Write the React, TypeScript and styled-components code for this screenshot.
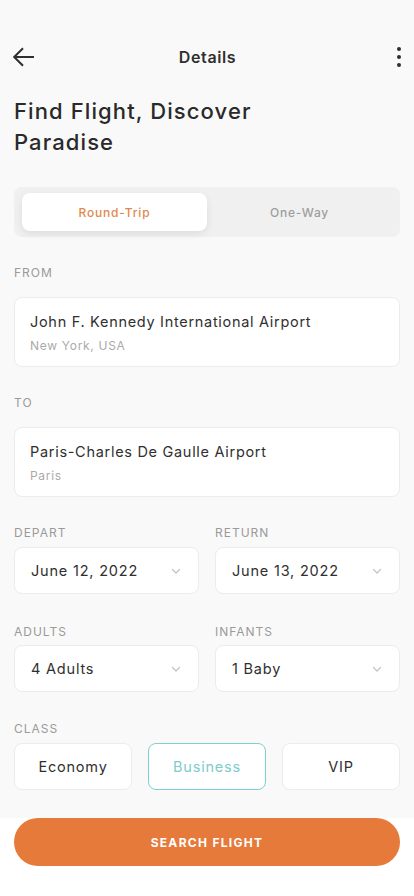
import styled, { createGlobalStyle } from "styled-components";

const GlobalStyle = createGlobalStyle`
  html, body {
    margin: 0;
    padding: 0;
    background: #f9f9f9;
    font-family: Inter, "Noto Sans", sans-serif;
    color: #2f2f2f;
  }
  * { box-sizing: border-box; }
`;

const Screen = styled.div`
  width: 414px;
  height: 896px;
  display: flex;
  flex-direction: column;
  background: #f9f9f9;
  overflow: hidden;
`;

const Content = styled.div`
  flex: 1;
  padding: 0 14px;
  display: flex;
  flex-direction: column;
`;

const Header = styled.header`
  height: 44px;
  margin-top: 35px;
  display: flex;
  align-items: center;
  justify-content: space-between;
`;

const IconButton = styled.button<{ $end?: boolean }>`
  width: 24px;
  height: 24px;
  padding: 0;
  margin: ${(p) => (p.$end ? "0 -2px 0 0" : "0 0 0 -1px")};
  border: none;
  background: none;
  display: flex;
  align-items: center;
  justify-content: ${(p) => (p.$end ? "flex-end" : "flex-start")};
  color: #2f2f2f;
`;

const HeaderTitle = styled.h1`
  margin: 0;
  font-size: 16px;
  font-weight: 600;
  letter-spacing: 0.6px;
  color: #2f2f2f;
`;

const Title = styled.h2`
  margin: 17px 0 0;
  font-size: 22px;
  font-weight: 500;
  line-height: 31px;
  letter-spacing: 1.1px;
  color: #2a2a2a;
  width: 280px;
`;

const Tabs = styled.div`
  margin-top: 29px;
  height: 50px;
  padding: 6px 8px;
  background: #f0f0f0;
  border-radius: 8px;
  display: grid;
  grid-template-columns: 1fr 1fr;
`;

const Tab = styled.button<{ $active?: boolean }>`
  border: none;
  border-radius: 8px;
  font-family: inherit;
  font-size: 12px;
  font-weight: 500;
  letter-spacing: 0.8px;
  background: ${(p) => (p.$active ? "#fff" : "transparent")};
  color: ${(p) => (p.$active ? "#e0894f" : "#9e9e9e")};
  box-shadow: ${(p) => (p.$active ? "0 3px 8px rgba(0,0,0,0.08)" : "none")};
`;

const Label = styled.div<{ $top: number; $gap: number }>`
  margin-top: ${(p) => p.$top}px;
  margin-bottom: ${(p) => p.$gap}px;
  font-size: 12px;
  letter-spacing: 1px;
  color: #9a9a9a;
  line-height: 14px;
  text-transform: uppercase;
`;

const Card = styled.div`
  height: 70px;
  flex-shrink: 0;
  background: #fff;
  border: 1px solid #ececec;
  border-radius: 8px;
  padding: 15px 15px 0;
  display: flex;
  flex-direction: column;
  gap: 7px;
`;

const CardTitle = styled.div`
  font-size: 14.5px;
  letter-spacing: 0.7px;
  color: #2f2f2f;
  line-height: 18px;
`;

const CardSub = styled.div`
  font-size: 12px;
  letter-spacing: 0.7px;
  color: #aaa;
  line-height: 15px;
`;

const Row = styled.div<{ $top: number }>`
  margin-top: ${(p) => p.$top}px;
  display: grid;
  grid-template-columns: 1fr 1fr;
  column-gap: 16px;
`;

const Field = styled.div`
  display: flex;
  flex-direction: column;
`;

const FieldLabel = styled.div<{ $gap: number }>`
  margin-bottom: ${(p) => p.$gap}px;
  font-size: 12px;
  letter-spacing: 1px;
  color: #9a9a9a;
  line-height: 14px;
`;

const Select = styled.div`
  height: 47px;
  background: #fff;
  border: 1px solid #ececec;
  border-radius: 8px;
  padding: 0 16px;
  display: flex;
  align-items: center;
  justify-content: space-between;
  font-size: 14.5px;
  letter-spacing: 0.8px;
  color: #2f2f2f;
`;

const ClassRow = styled.div`
  display: grid;
  grid-template-columns: repeat(3, 1fr);
  column-gap: 16px;
`;

const ClassOption = styled.button<{ $active?: boolean }>`
  height: 47px;
  background: #fff;
  border: 1px solid ${(p) => (p.$active ? "#7ecfd0" : "#ececec")};
  border-radius: 8px;
  font-family: inherit;
  font-size: 14.5px;
  letter-spacing: 0.8px;
  color: ${(p) => (p.$active ? "#7ecbcc" : "#2f2f2f")};
`;

const Footer = styled.div`
  background: #fff;
  padding: 0 14px 30px;
`;

const SearchButton = styled.button`
  width: 100%;
  height: 48px;
  border: none;
  border-radius: 24px;
  background: #e57a3b;
  color: #fff;
  font-family: inherit;
  font-size: 12px;
  font-weight: 700;
  letter-spacing: 1.3px;
`;

const Chevron = () => (
  <svg width="12" height="12" viewBox="0 0 12 12" fill="none">
    <path d="M2.5 4.5 6 8l3.5-3.5" stroke="#c4c4c4" strokeWidth="1.3" strokeLinecap="round" strokeLinejoin="round" />
  </svg>
);

export default function App() {
  return (
    <Screen>
      <GlobalStyle />
      <Content>
        <Header>
          <IconButton>
            <svg width="22" height="22" viewBox="0 0 22 22" fill="none">
              <path d="M21 11H1.2M10 2.2 1.2 11l8.8 8.8" stroke="#2f2f2f" strokeWidth="2" strokeLinejoin="miter" />
            </svg>
          </IconButton>
          <HeaderTitle>Details</HeaderTitle>
          <IconButton $end>
            <svg width="6" height="22" viewBox="0 0 6 22" fill="#2f2f2f">
              <circle cx="3" cy="3" r="2" />
              <circle cx="3" cy="11" r="2" />
              <circle cx="3" cy="19" r="2" />
            </svg>
          </IconButton>
        </Header>
        <Title>Find Flight, Discover Paradise</Title>
        <Tabs>
          <Tab $active>Round-Trip</Tab>
          <Tab>One-Way</Tab>
        </Tabs>

        <Label $top={29} $gap={17}>From</Label>
        <Card>
          <CardTitle>John F. Kennedy International Airport</CardTitle>
          <CardSub>New York, USA</CardSub>
        </Card>

        <Label $top={29} $gap={17}>To</Label>
        <Card>
          <CardTitle>Paris-Charles De Gaulle Airport</CardTitle>
          <CardSub>Paris</CardSub>
        </Card>

        <Row $top={29}>
          <Field>
            <FieldLabel $gap={7}>DEPART</FieldLabel>
            <Select>
              June 12, 2022
              <Chevron />
            </Select>
          </Field>
          <Field>
            <FieldLabel $gap={7}>RETURN</FieldLabel>
            <Select>
              June 13, 2022
              <Chevron />
            </Select>
          </Field>
        </Row>

        <Row $top={31}>
          <Field>
            <FieldLabel $gap={6}>ADULTS</FieldLabel>
            <Select>
              4 Adults
              <Chevron />
            </Select>
          </Field>
          <Field>
            <FieldLabel $gap={6}>INFANTS</FieldLabel>
            <Select>
              1 Baby
              <Chevron />
            </Select>
          </Field>
        </Row>

        <Label $top={30} $gap={7}>Class</Label>
        <ClassRow>
          <ClassOption>Economy</ClassOption>
          <ClassOption $active>Business</ClassOption>
          <ClassOption>VIP</ClassOption>
        </ClassRow>
      </Content>
      <Footer>
        <SearchButton>SEARCH FLIGHT</SearchButton>
      </Footer>
    </Screen>
  );
}
